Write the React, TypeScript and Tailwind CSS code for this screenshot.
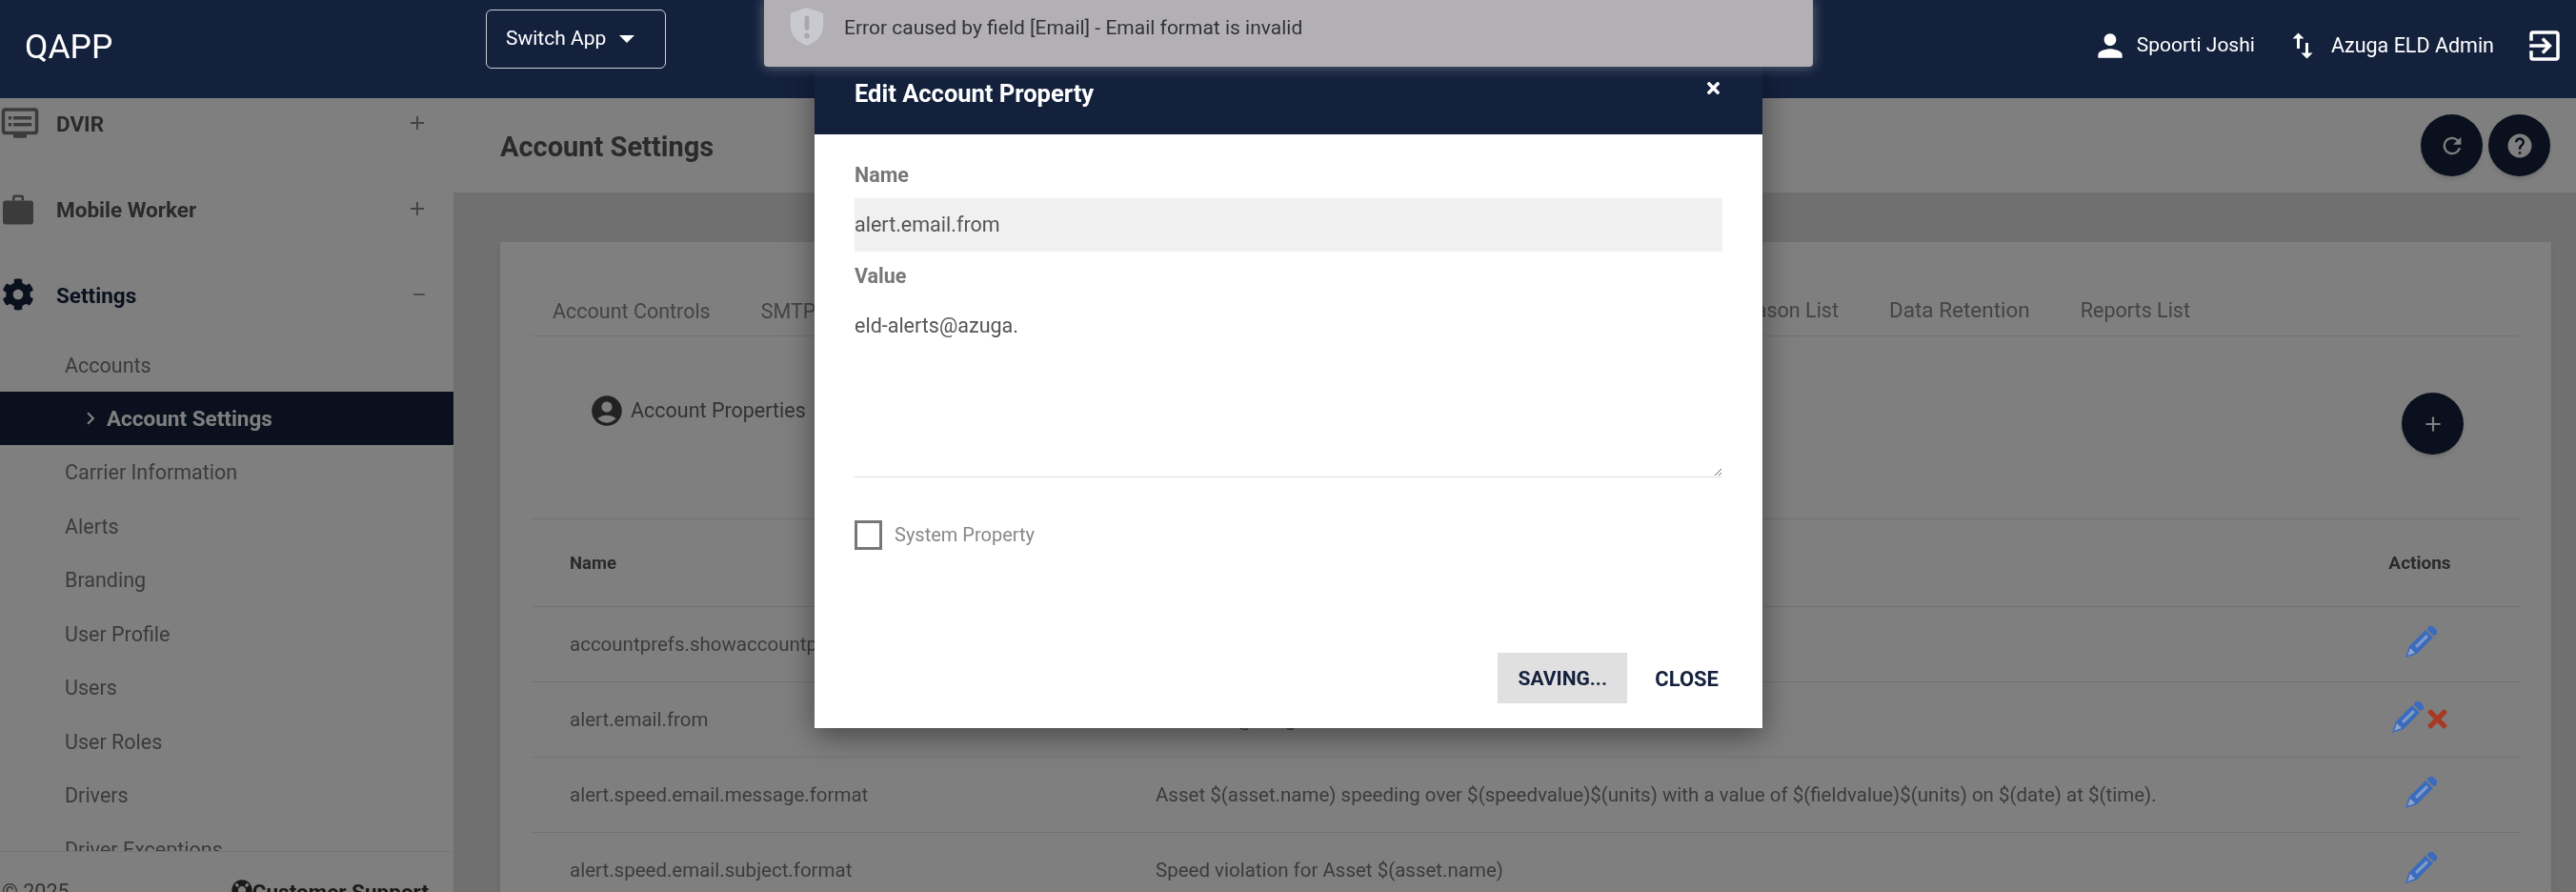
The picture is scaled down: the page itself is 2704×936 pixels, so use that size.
import React from "react";
import { FaCog, FaTimes, FaLifeRing } from "react-icons/fa";
import {
  MdDvr,
  MdPerson,
  MdImportExport,
  MdOutlineExitToApp,
  MdRefresh,
  MdHelp,
  MdAccountCircle,
  MdChevronRight,
  MdAdd,
  MdRemove,
} from "react-icons/md";

const font = "font-['Roboto',sans-serif]";

const subItems = [
  "Accounts",
  "Account Settings",
  "Carrier Information",
  "Alerts",
  "Branding",
  "User Profile",
  "Users",
  "User Roles",
  "Drivers",
  "Driver Exceptions",
];

const rows = [
  { name: "accountprefs.showaccountpreferences", value: "true", del: false },
  { name: "alert.email.from", value: "eld-alerts@azuga.com", del: true },
  {
    name: "alert.speed.email.message.format",
    value:
      "Asset $(asset.name) speeding over $(speedvalue)$(units) with a value of $(fieldvalue)$(units) on $(date) at $(time).",
    del: false,
  },
  { name: "alert.speed.email.subject.format", value: "Speed violation for Asset $(asset.name)", del: false },
];

function Pencil() {
  return (
    <svg viewBox="0 0 32 32" className="relative z-[15] -mt-[2px] h-[36px] w-[36px]">
      <g transform="rotate(45 16 16)" fill="#3b6bbd">
        <rect x="11" y="-4" width="10" height="6" rx="2" />
        <path d="M11 3.5h10V25l-5 10-5-10z" />
        <rect x="14.6" y="6" width="2.8" height="15" fill="#7f9cc9" />
        <path d="M12.8 25.5h6.4L16 32z" fill="#8fa6cb" />
      </g>
    </svg>
  );
}

function Briefcase() {
  return (
    <svg viewBox="0 0 34 32" className="ml-[2px] h-[33px] w-[34px]" fill="currentColor">
      <path d="M11 7V3.5A2.5 2.5 0 0 1 13.5 1h7A2.5 2.5 0 0 1 23 3.5V7h-2.5V3.5h-7V7z" />
      <rect x="1" y="7" width="32" height="25" rx="3" />
    </svg>
  );
}

function NavGroup({ icon, label, open, navy }: { icon: React.ReactNode; label: string; open?: boolean; navy?: boolean }) {
  return (
    <div className="flex h-[90px] items-center pr-[26px]">
      <span className={`flex w-[59px] shrink-0 items-center ${navy ? "text-[#14213d]" : "text-[#777]"}`}>{icon}</span>
      <span className={`flex-1 pt-[3px] text-[22.5px] font-bold ${navy ? "text-[#14213d]" : "text-[#555]"}`}>{label}</span>
      {open ? <MdRemove className="text-[20px] text-[#888]" /> : <MdAdd className="text-[24px] text-[#888]" />}
    </div>
  );
}

function RoundButton({ children }: { children: React.ReactNode }) {
  return (
    <button className="flex h-[65px] w-[65px] items-center justify-center rounded-full bg-[#14213d] text-white shadow-md">
      {children}
    </button>
  );
}

export default function App() {
  return (
    <div className={`relative flex h-[936px] w-[2704px] flex-col overflow-hidden bg-white blur-[0.6px] ${font}`}>
      {/* Top bar */}
      <header className="relative z-10 flex h-[103px] shrink-0 items-center bg-[#14213d] pl-[26px] pr-[12px] text-white">
        <span className="-mt-[4px] w-[484px] text-[35.5px] leading-none">QAPP</span>
        <button className="-mt-[22px] flex h-[62px] w-[189px] items-center rounded-md border border-[#c9cdd6] pl-[20px] text-[21px]">
          Switch App
          <span className="ml-[14px] h-0 w-0 border-x-[8px] border-t-[8px] border-x-transparent border-t-white" />
        </button>
        <div className="-mt-[7px] ml-auto flex items-center text-[21px]">
          <MdPerson className="text-[38px]" />
          <span className="ml-[9px]">Spoorti Joshi</span>
          <MdImportExport className="ml-[32px] text-[36px]" />
          <span className="ml-[12px] text-[21.5px]">Azuga ELD Admin</span>
          <MdOutlineExitToApp className="ml-[32px] text-[42px]" />
        </div>
      </header>

      <div className="flex min-h-0 flex-1">
        {/* Sidebar */}
        <aside className="flex w-[476px] shrink-0 flex-col bg-white shadow-lg">
          <nav className="min-h-0 flex-1 overflow-hidden border-b border-[#e8e8e8]">
            <div className="-mt-[19px]">
              <NavGroup icon={<MdDvr className="text-[42px]" />} label="DVIR" />
              <NavGroup icon={<Briefcase />} label="Mobile Worker" />
              <NavGroup icon={<FaCog className="ml-[2px] text-[34px]" />} label="Settings" open navy />
              {subItems.map((item) =>
                item === "Account Settings" ? (
                  <div key={item} className="flex h-[56px] items-center bg-[#14213d] pl-[82px] text-[22.5px] font-bold text-white">
                    <MdChevronRight className="text-[26px]" />
                    <span className="ml-[4px] pt-[2px]">{item}</span>
                  </div>
                ) : (
                  <div key={item} className="flex h-[56.5px] items-center pl-[68px] pt-[3px] text-[21.5px] text-[#777]">
                    {item}
                  </div>
                ),
              )}
            </div>
          </nav>
          <div className="flex h-[42px] shrink-0 items-start justify-between pl-[2px] pr-[26px] pt-[28px] text-[21.5px] leading-[28px] text-[#666]">
            <span>© 2025</span>
            <span className="flex items-center text-[22.5px] font-bold text-[#333]">
              <FaLifeRing className="-mt-[5px] text-[22px]" />
              Customer Support
            </span>
          </div>
        </aside>

        {/* Main */}
        <main className="flex min-w-0 flex-1 flex-col bg-[#e0e0e0]">
          <div className="flex h-[99px] shrink-0 items-center justify-between bg-white pl-[49px] pr-[27px]">
            <h1 className="mt-[4px] text-[29px] font-bold text-[#555]">Account Settings</h1>
            <div className="flex gap-[6px]">
              <RoundButton>
                <MdRefresh className="text-[28px]" />
              </RoundButton>
              <RoundButton>
                <MdHelp className="text-[30px]" />
              </RoundButton>
            </div>
          </div>

          <div className="min-h-0 flex-1 pl-[49px] pr-[26px] pt-[52px]">
            <div className="h-full bg-white px-[33px] shadow-md">
              {/* Tabs */}
              <div className="flex h-[99px] items-end border-b border-[#e4e4e4] pb-[9px] text-[21.5px] text-[#888]">
                <span className="pl-[22px]">Account Controls</span>
                <span className="pl-[53px]">SMTP Settings</span>
                <div className="ml-auto flex items-baseline gap-[53px] pr-[346px]">
                  <span>Reason List</span>
                  <span className="text-[22.5px]">Data Retention</span>
                  <span>Reports List</span>
                </div>
              </div>

              {/* Sub section */}
              <div className="flex h-[191px] items-start justify-between pl-[60px] pr-[59px]">
                <div className="mt-[59px] flex items-center text-[21.5px] text-[#666]">
                  <MdAccountCircle className="text-[38px] text-[#444]" />
                  <span className="ml-[6px]">Account Properties</span>
                </div>
                <div className="mt-[59px]">
                  <RoundButton>
                    <MdAdd className="text-[26px]" />
                  </RoundButton>
                </div>
              </div>

              {/* Table */}
              <div className="grid grid-cols-[655px_1fr_210px] border-t border-[#e4e4e4] text-[20.5px] text-[#777]">
                <div className="flex h-[91px] items-center pl-[40px] pt-[2px] text-[18.5px] font-bold text-[#555]">Name</div>
                <div />
                <div className="flex h-[91px] items-center justify-center pt-[2px] text-[19px] font-bold text-[#555]">Actions</div>
                {rows.map((row) => (
                  <React.Fragment key={row.name}>
                    <div className="flex h-[79px] items-center border-t border-[#e4e4e4] pl-[40px]">{row.name}</div>
                    <div className="flex h-[79px] items-center border-t border-[#e4e4e4]">{row.value}</div>
                    <div className="flex h-[79px] items-center justify-center border-t border-[#e4e4e4]">
                      <Pencil />
                      {row.del && <FaTimes className="relative z-[15] -mt-[2px] text-[29px] text-[#a83a25]" />}
                    </div>
                  </React.Fragment>
                ))}
              </div>
            </div>
          </div>
        </main>
      </div>

      {/* Backdrop below the top bar */}
      <div className="absolute inset-x-0 bottom-0 top-[103px] z-[5] bg-black/50" />

      {/* Modal */}
      <div className="absolute left-[855px] top-[60px] z-20 flex h-[704px] w-[995px] flex-col bg-white shadow-[0_8px_30px_rgba(0,0,0,0.45)]">
        <div className="flex h-[81px] shrink-0 items-start justify-between bg-[#14213d] pl-[42px] pr-[42px] text-white">
          <span className="mt-[23px] text-[25.5px] font-bold leading-[30px]">Edit Account Property</span>
          <FaTimes className="mt-[23px] text-[19px]" />
        </div>
        <div className="flex flex-1 flex-col px-[42px] pt-[30px]">
          <label className="h-[26px] text-[21.5px] font-bold leading-[26px] text-[#777]">Name</label>
          <input readOnly value="alert.email.from" className="mt-[11px] h-[56px] bg-[#f0f0f0] pb-[2px] text-[21.5px] text-[#555] outline-none" />
          <label className="mt-[13px] h-[26px] text-[21.5px] font-bold leading-[26px] text-[#777]">Value</label>
          <textarea
            readOnly
            defaultValue="eld-alerts@azuga."
            className="mt-[15px] h-[183px] border-b border-[#ddd] py-[10px] text-[21.5px] leading-[28px] text-[#555] outline-none"
          />
          <div className="mt-[45px] flex items-center">
            <input type="checkbox" readOnly className="h-[31px] w-[29px] appearance-none border-[3px] border-[#777] bg-white" />
            <span className="-mt-[2px] ml-[13px] text-[20px] text-[#888]">System Property</span>
          </div>
          <div className="mt-[108px] flex items-center justify-end pr-[4px] text-[21px] font-bold text-[#14213d]">
            <button className="h-[53px] w-[136px] bg-[#e0e0e0] pt-[2px]">SAVING...</button>
            <button className="ml-[29px] pt-[2px] text-[22px]">CLOSE</button>
          </div>
        </div>
      </div>

      {/* Toast */}
      <div className="absolute left-[802px] top-0 z-30 flex h-[70px] w-[1101px] items-center rounded-b-sm bg-[#b2b0b5] pl-[26px] shadow-[0_0_14px_rgba(255,255,255,0.35)]">
        <svg viewBox="0 0 36 42" className="-mt-[14px] h-[40px] w-[38px]">
          <path d="M18 0 L36 6 V20 C36 31 28 38 18 42 C8 38 0 31 0 20 V6 Z" fill="#c8cad0" />
          <rect x="15.5" y="9" width="5" height="16" rx="2.5" fill="#a9a8ac" />
          <circle cx="18" cy="31" r="3" fill="#a9a8ac" />
        </svg>
        <span className="ml-[20px] -mt-[10px] text-[21px] text-[#333]">Error caused by field [Email] - Email format is invalid</span>
      </div>
    </div>
  );
}
